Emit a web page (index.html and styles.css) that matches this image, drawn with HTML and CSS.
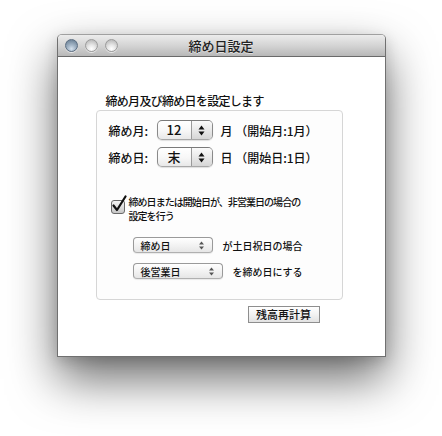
FILE: index.html
```html
<!DOCTYPE html>
<html lang="ja">
<head>
<meta charset="utf-8">
<title>締め日設定</title>
<link rel="stylesheet" href="styles.css">
</head>
<body>
<div class="window">
  <div class="titlebar">
    <div class="lights">
      <span class="light light-active"></span>
      <span class="light"></span>
      <span class="light"></span>
    </div>
    <div class="title">締め日設定</div>
    <div class="spacer"></div>
  </div>
  <div class="content">
    <div class="heading">締め月及び締め日を設定します</div>
    <div class="group">
      <div class="field-row">
        <span class="label">締め月:</span>
        <div class="stepper">
          <span class="stepper-value">12</span>
          <span class="stepper-arrows">
            <svg width="7" height="11" viewBox="0 0 7 11"><polygon points="0.5,4.5 3.5,0.5 6.5,4.5" fill="#111"/><polygon points="0.5,6.5 3.5,10.5 6.5,6.5" fill="#111"/></svg>
          </span>
        </div>
        <span class="suffix">月 （開始月:1月）</span>
      </div>
      <div class="field-row field-row-2">
        <span class="label">締め日:</span>
        <div class="stepper">
          <span class="stepper-value">末</span>
          <span class="stepper-arrows">
            <svg width="7" height="11" viewBox="0 0 7 11"><polygon points="0.5,4.5 3.5,0.5 6.5,4.5" fill="#111"/><polygon points="0.5,6.5 3.5,10.5 6.5,6.5" fill="#111"/></svg>
          </span>
        </div>
        <span class="suffix">日 （開始日:1日）</span>
      </div>
      <div class="check-row">
        <span class="checkbox">
          <svg class="checkmark" width="16" height="18" viewBox="0 0 16 18"><path d="M2.5 10.5 L6 15 L14.5 1.5" fill="none" stroke="#111" stroke-width="2.2" stroke-linecap="round" stroke-linejoin="round"/></svg>
        </span>
        <span class="check-text">締め日または開始日が、非営業日の場合の<br>設定を行う</span>
      </div>
      <div class="popup-row popup-row-1">
        <div class="popup popup-short">
          <span>締め日</span>
          <svg width="5" height="9" viewBox="0 0 5 9"><polygon points="0,3.5 2.5,0.5 5,3.5" fill="#555"/><polygon points="0,5.5 2.5,8.5 5,5.5" fill="#555"/></svg>
        </div>
        <span class="popup-text">が土日祝日の場合</span>
      </div>
      <div class="popup-row popup-row-2">
        <div class="popup popup-long">
          <span>後営業日</span>
          <svg width="5" height="9" viewBox="0 0 5 9"><polygon points="0,3.5 2.5,0.5 5,3.5" fill="#555"/><polygon points="0,5.5 2.5,8.5 5,5.5" fill="#555"/></svg>
        </div>
        <span class="popup-text">を締め日にする</span>
      </div>
    </div>
    <div class="actions">
      <button class="btn">残高再計算</button>
    </div>
  </div>
</div>
</body>
</html>
```

FILE: styles.css
```css
html, body {
  margin: 0;
  height: 100%;
}
body {
  background: #fff;
  font-family: "Noto Sans CJK JP", "Noto Sans", sans-serif;
  color: #111;
  padding-top: 34px;
  box-sizing: border-box;
  overflow: hidden;
}
.window {
  width: 329px;
  height: 323px;
  margin: 0 auto;
  box-sizing: border-box;
  border: 1px solid #707070;
  border-top-color: #a0a0a0;
  border-radius: 5px 5px 0 0;
  background: #fff;
  overflow: hidden;
  box-shadow: 0 22px 48px rgba(0, 0, 0, 0.58), 0 4px 14px rgba(0, 0, 0, 0.15);
}
.titlebar {
  height: 21px;
  border-bottom: 1px solid #6a6a6a;
  background: linear-gradient(#ececec, #d4d4d4 50%, #b8b8b8);
  display: grid;
  grid-template-columns: 1fr auto 1fr;
  align-items: center;
}
.lights {
  display: flex;
  gap: 7px;
  padding-left: 7px;
}
.light {
  width: 11px;
  height: 11px;
  border-radius: 50%;
  border: 1px solid #9b9b9b;
  background: radial-gradient(circle at 50% 80%, #ffffff 0, #e9e9e9 35%, #c4c4c4 75%, #b0b0b0 100%);
  box-shadow: 0 1px 0 rgba(255, 255, 255, 0.6);
}
.light-active {
  border-color: #5b6d80;
  background: radial-gradient(circle at 50% 80%, #d6e2ee 0, #a7b8c9 35%, #7a8fa3 75%, #62768b 100%);
}
.title {
  font-size: 13px;
  line-height: 16px;
  color: #222;
  font-weight: 500;
  text-shadow: 0 1px 0 rgba(255, 255, 255, 0.5);
}
.content {
  padding: 37px 42px 0 38px;
  font-weight: 500;
}
.heading {
  font-size: 12px;
  line-height: 14px;
  letter-spacing: -0.7px;
  margin-left: 10px;
  margin-bottom: 2px;
}
.group {
  height: 190px;
  box-sizing: border-box;
  border: 1px solid #d6d6d6;
  border-radius: 4px;
  background: #fdfdfd;
  padding-top: 9px;
}
.field-row {
  display: flex;
  align-items: center;
  height: 20px;
  padding-left: 12px;
  font-size: 12px;
}
.field-row-2 {
  margin-top: 7px;
}
.label {
  width: 48px;
}
.stepper {
  width: 56px;
  height: 20px;
  box-sizing: border-box;
  display: flex;
  border: 1px solid #8a8a8a;
  border-top-color: #7a7a7a;
  border-bottom-color: #a8a8a8;
  border-radius: 5px;
  overflow: hidden;
  background: linear-gradient(#ffffff, #f7f7f7 55%, #e8e8e8);
  box-shadow: 0 1px 1px rgba(0, 0, 0, 0.12);
}
.stepper-value {
  flex: 1;
  text-align: center;
  font-size: 13px;
  line-height: 18px;
}
.stepper-arrows {
  width: 20px;
  border-left: 1px solid #9a9a9a;
  display: flex;
  align-items: center;
  justify-content: center;
  background: linear-gradient(#fafafa, #e9e9e9 50%, #d6d6d6);
}
.suffix {
  margin-left: 8px;
}
.check-row {
  margin-top: 28px;
  padding-left: 14px;
  display: flex;
  align-items: flex-start;
  gap: 4px;
}
.checkbox {
  position: relative;
  width: 14px;
  height: 14px;
  margin-top: 5px;
  box-sizing: border-box;
  border: 1px solid #6a6a6a;
  border-radius: 3px;
  background: linear-gradient(#f4f4f4, #dadada 60%, #c6c6c6);
  flex-shrink: 0;
}
.checkmark {
  position: absolute;
  left: -1px;
  top: -6px;
}
.check-text {
  font-size: 10px;
  line-height: 14px;
  letter-spacing: -0.95px;
}
.popup-row {
  display: flex;
  align-items: center;
  gap: 10px;
  padding-left: 36px;
  font-size: 10px;
}
.popup-row-1 {
  margin-top: 14px;
}
.popup-row-2 {
  margin-top: 10px;
}
.popup {
  height: 16px;
  box-sizing: border-box;
  display: flex;
  align-items: center;
  justify-content: space-between;
  padding: 0 8px 0 7px;
  border: 1px solid #9a9a9a;
  border-bottom-color: #b0b0b0;
  border-radius: 4px;
  background: linear-gradient(#ffffff, #f3f3f3 50%, #e6e6e6);
  box-shadow: 0 1px 1px rgba(0, 0, 0, 0.08);
  font-size: 10px;
}
.popup-short {
  width: 80px;
}
.popup-long {
  width: 90px;
}
.actions {
  display: flex;
  justify-content: flex-end;
  padding-right: 23px;
  margin-top: 6px;
}
.btn {
  width: 72px;
  height: 17px;
  padding: 0;
  border: 1px solid #8e8e8e;
  border-radius: 0;
  background: linear-gradient(#ffffff, #f2f2f2 50%, #e2e2e2);
  font-family: "Noto Sans CJK JP", "Noto Sans", sans-serif;
  font-weight: 500;
  font-size: 11px;
  line-height: 15px;
  color: #111;
}
```
